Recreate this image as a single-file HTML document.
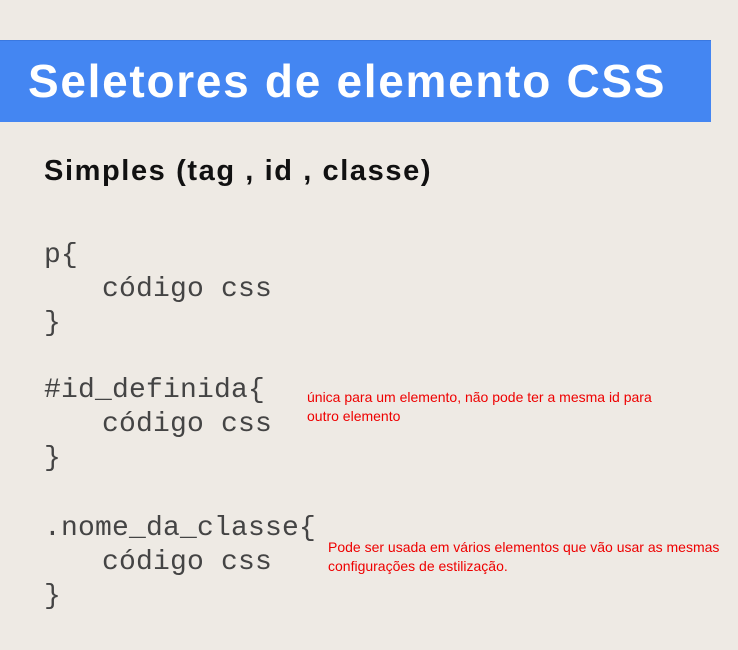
<!DOCTYPE html>
<html><head><meta charset="utf-8"><style>
body{margin:0;width:738px;height:650px;background:#eeeae4;position:relative;overflow:hidden;font-family:"Liberation Sans",sans-serif}
.bar{position:absolute;left:0;top:40px;width:711px;height:81px;background:#4486f2;border-top:1px solid #3a78e0}
.t{position:absolute;left:28px;top:54px;color:#fff;font-weight:bold;font-size:46px;letter-spacing:1.7px;white-space:nowrap}
.s{position:absolute;left:44px;top:155px;font-weight:bold;font-size:29px;color:#111;letter-spacing:1.6px}
.c{position:absolute;left:44px;font-family:"Liberation Mono",monospace;font-size:28px;color:#444;line-height:34px;white-space:pre;margin:0;letter-spacing:0.2px}
.c span{padding-left:58px}
.r{position:absolute;color:#e00;font-size:14px;line-height:19px}
</style></head><body>
<div class="bar"></div>
<div class="t">Seletores de elemento CSS</div>
<div class="s">Simples (tag , id , classe)</div>
<pre class="c" style="top:239px">p{
<span>código css</span>
}</pre>
<pre class="c" style="top:374px">#id_definida{
<span>código css</span>
}</pre>
<pre class="c" style="top:512px">.nome_da_classe{
<span>código css</span>
}</pre>
<div class="r" style="left:307px;top:388px">única para um elemento, não pode ter a mesma id para<br>outro elemento</div>
<div class="r" style="left:328px;top:538px">Pode ser usada em vários elementos que vão usar as mesmas<br>configurações de estilização.</div>
</body></html>
